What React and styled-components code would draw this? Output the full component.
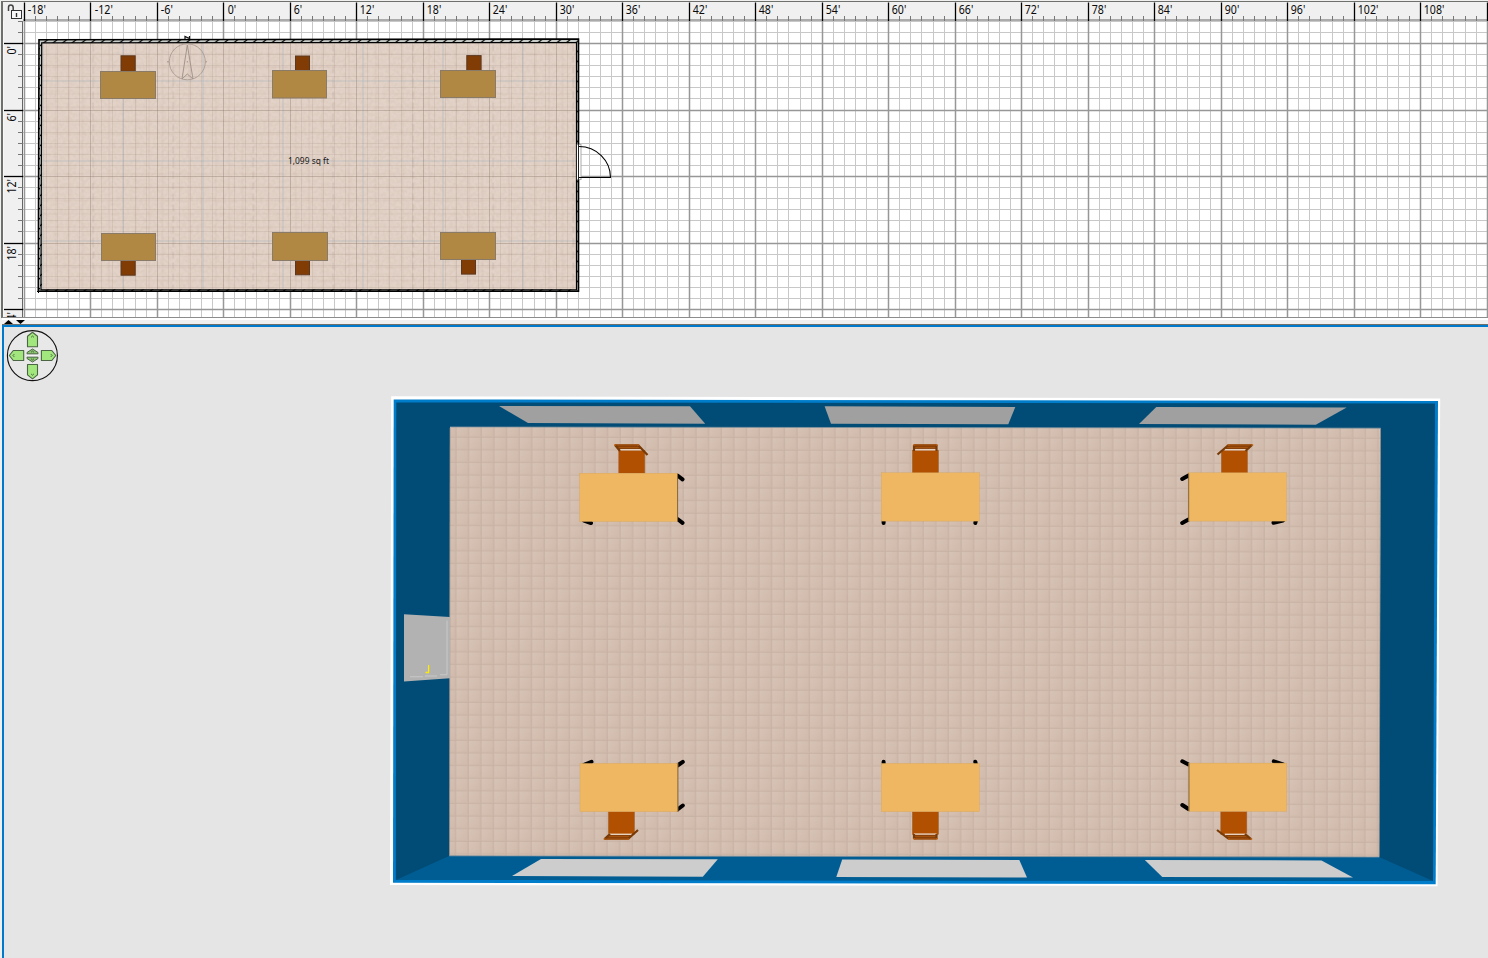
import React from "react";
import styled, { createGlobalStyle } from "styled-components";

const GlobalStyle = createGlobalStyle`
  * { box-sizing: border-box; }
  body { margin: 0; background: #f0f0f0; overflow: hidden; }
`;

const Window = styled.main`
  display: flex;
  flex-direction: column;
  width: 1488px;
  height: 958px;
  overflow: hidden;
  background: #f0f0f0;
  font-family: "Noto Sans", "Open Sans", sans-serif;
`;

const PlanPane = styled.section`
  display: grid;
  grid-template-columns: 20px 1fr;
  grid-template-rows: 19px 1fr;
  flex: none;
  height: 317px;
  margin: 1px 0 0 1px;
  border: solid #6e706c;
  border-width: 1px 0 0 2px;
  border-bottom: 1px solid #8c8c8c;
`;

const Drawing = styled.svg`
  display: block;
  width: 100%;
  height: 100%;
  min-width: 0;
  min-height: 0;
  overflow: hidden;
  background: ${(p) => p.$fill || "#f0f0f0"};
`;

const RulerLabel = styled.text`
  font: 12px "Noto Sans", "Open Sans", sans-serif;
  fill: #0a0a0a;
`;

const AreaLabel = styled.text`
  font: 8.8px "Noto Sans", "Open Sans", sans-serif;
  fill: #1a1a1a;
`;

const Divider = styled.div`
  display: flex;
  align-items: flex-end;
  gap: 3px;
  height: 7px;
  flex: none;
  padding-left: 2px;
  margin-left: 2px;
  background: linear-gradient(#fff 0 2px, #f0f0f0 2px);
  border-bottom: 1px solid #6e706c;
`;

const Collapse = styled.svg`
  display: block;
  width: 9px;
  height: 4px;
  transform: ${(p) => (p.$down ? "none" : "rotate(180deg)")};
`;

const ViewPane = styled.section`
  flex: 1;
  min-height: 0;
  margin-left: 2px;
  border: solid #007acc;
  border-width: 2px 0 0 2px;
  background: #e5e5e5;
`;

const STEP = 66.5;
const range = (n) => Array.from({ length: n }, (_, i) => i);
const gx = (i) => Math.floor(24.2 + (i * STEP) / 6) + 0.5;
const gy = (i) => Math.floor(21.4 + (i * STEP) / 6) + 0.5;

const labelWidth = (s) => {
  const digits = s.replace(/\D/g, "").length;
  return digits * 6.05 + 2.4 + (s[0] === "-" ? 3.6 : 0);
};

function TopRuler() {
  return (
    <Drawing viewBox="23 2 1465 19">
      <path d="M23 20H1488" stroke="#666" />
      {range(133).map((i) => (
        <path
          key={i}
          d={`M${gx(i)} ${i % 6 ? 16 : 2.5}V21`}
          stroke={i % 6 ? "#777" : "#000"}
          strokeWidth={i % 6 ? 1 : 1.3}
        />
      ))}
      {range(22).map((i) => {
        const s = `${i * 6 - 18}'`;
        const start = i === 1 || i === 3 ? 4.2 : 3.3;
        return (
          <RulerLabel key={i} x={gx(i * 6) + start} y="13.8" textLength={labelWidth(s)} lengthAdjust="spacingAndGlyphs">
            {s}
          </RulerLabel>
        );
      })}
    </Drawing>
  );
}

function SideRuler() {
  return (
    <Drawing viewBox="3 21 20 296">
      <path d="M3.5 21V317" stroke="#f8f8f8" />
      <path d="M22.5 21V317" stroke="#666" />
      {range(27).map((i) => {
        const major = i % 6 === 2;
        return (
          <path
            key={i}
            d={`M${major ? 4 : 18} ${gy(i)}H23`}
            stroke={major ? "#000" : "#777"}
            strokeWidth={major ? 1.3 : 1}
          />
        );
      })}
      {range(5).map((i) => {
        const s = `${i * 6}'`;
        const w = labelWidth(s);
        return (
          <RulerLabel
            key={i}
            transform={`translate(15.6 ${gy(i * 6 + 2) + 2.6 + w}) rotate(-90)`}
            textLength={w}
            lengthAdjust="spacingAndGlyphs"
          >
            {s}
          </RulerLabel>
        );
      })}
    </Drawing>
  );
}

function LockCorner() {
  return (
    <Drawing viewBox="3 2 20 19">
      <path d="M8.5 11V7.5Q8.5 5 10.8 5T13.2 7.5V10.5" fill="none" stroke="#444" strokeWidth="1.5" />
      <rect x="11.5" y="10.5" width="10" height="8" fill="#fafafa" stroke="#333" />
      <path d="M16.5 13V17" stroke="#333" strokeWidth="1.4" />
    </Drawing>
  );
}

const planDesks = [
  [100.5, 71.5, 55, 27],
  [272.5, 70.5, 54, 27.5],
  [440.5, 70.5, 55, 27],
  [101.5, 233.5, 54, 27],
  [272.5, 232.5, 55, 28],
  [440.5, 232.5, 55, 27],
];
const planChairs = [
  [121, 55.8, 14.2, 15.5],
  [295.5, 56, 14, 15],
  [466.8, 55.6, 14.3, 15],
  [121, 260.5, 14.2, 14.7],
  [295.5, 260.5, 14, 14.3],
  [461.5, 259.5, 14, 14.6],
];

function PlanCanvas() {
  return (
    <Drawing $fill="#fff" viewBox="23 21 1465 296">
      <defs>
        <pattern id="hatch" width="9.5" height="10" x="2" y="37" patternUnits="userSpaceOnUse">
          <path d="M-1 9.5L10.5 .5" stroke="#000" strokeWidth="1.1" />
        </pattern>
        <pattern id="planTile" x="42.5" y="80.5" width="80" height="80" patternUnits="userSpaceOnUse">
          <path d="M0 13.3H80M0 26.6H80M0 40H80M0 53.3H80M0 66.6H80M13.3 0V80M26.6 0V80M40 0V80M66.6 0V80" stroke="#b79d8f" strokeOpacity=".2" />
          <path d="M50.7 0V80" stroke="#7f685d" strokeOpacity=".2" strokeDasharray="7 4" />
          <path d="M0 .2H80M.2 0V80" stroke="#a9b4bc" strokeOpacity=".8" />
        </pattern>
        <filter id="grain" x="0" y="0" width="100%" height="100%">
          <feTurbulence type="fractalNoise" baseFrequency=".3" numOctaves="2" seed="5" />
          <feColorMatrix values="0 0 0 0 .55  0 0 0 0 .42  0 0 0 0 .33  .9 0 0 0 -.32" />
        </filter>
      </defs>
      {range(133).filter((i) => i % 6).map((i) => <path key={i} d={`M${gx(i)} 21V317`} stroke="#c8c8c8" />)}
      {range(27).filter((i) => i % 6 !== 2).map((i) => <path key={i} d={`M23 ${gy(i)}H1488`} stroke="#c8c8c8" />)}
      {range(23).map((i) => <path key={i} d={`M${gx(i * 6)} 21V317`} stroke="#979797" strokeWidth="1.5" />)}
      {range(5).map((i) => <path key={i} d={`M23 ${gy(i * 6 + 2)}H1488`} stroke="#979797" strokeWidth="1.5" />)}

      <path d="M42 43H577V290H41Z" fill="#e2d2c7" />
      <rect x="42" y="43" width="535" height="247" filter="url(#grain)" opacity=".42" />
      <rect x="42" y="43" width="535" height="247" fill="url(#planTile)" />
      {range(49).map((i) => <path key={i} d={`M${gx(i + 2)} 43V290`} stroke="#857366" strokeOpacity={(i + 2) % 6 ? 0.14 : 0.36} />)}
      {range(22).map((i) => <path key={i} d={`M42 ${gy(i + 3)}H577`} stroke="#857366" strokeOpacity={(i + 3) % 6 === 2 ? 0.36 : 0.14} />)}

      <path d="M38.8 39.8L578.5 39V291H38.2Z M42 43V289.5H576.5V42.7Z" fill="#c8ccc8" fillRule="evenodd" />
      <path d="M38.8 39.8L578.5 39V291H38.2Z M42 43V289.5H576.5V42.7Z" fill="url(#hatch)" fillRule="evenodd" />
      <path d="M39 39.8L578.5 39V291.2H38.3Z" fill="none" stroke="#000" strokeWidth="1.6" />
      <path d="M41.7 42.8L576.5 42.5V289.8H41Z" fill="none" stroke="#000" strokeWidth="1.2" />
      <path d="M37 291.5H40M38.5 289V293" stroke="#000" />
      <rect x="576.5" y="144.5" width="4.5" height="35" fill="#fff" stroke="#aaa" />
      <path d="M576.5 144V180M578.5 144V180" stroke="#222" />
      <path d="M579 146.5A31.5 31 0 0 1 610.5 177.5H579" fill="none" stroke="#000" strokeWidth="1.1" />

      {planChairs.map(([x, y, width, height], i) => (
        <rect key={i} {...{ x, y, width, height }} fill="#803c04" stroke="#5d3820" />
      ))}
      {planDesks.map(([x, y, width, height], i) => (
        <rect key={i} {...{ x, y, width, height }} fill="#b08844" stroke="#8a7a68" />
      ))}
      <AreaLabel x="288" y="163.8" textLength="41" lengthAdjust="spacingAndGlyphs">1,099 sq ft</AreaLabel>

      <g fill="none" stroke="#a3968d">
        <circle cx="187.3" cy="61.8" r="18" strokeOpacity=".8" />
        <path d="M187.3 45L182 79L187.3 74L193 79ZM187.3 61V62.5M167 61.8H169M205.5 61.8H207" />
      </g>
      <path d="M185 39V36.5L189.5 38.5V36" fill="none" stroke="#111" strokeWidth="1.2" />
    </Drawing>
  );
}

const navArrow = "M-5 7.2V-3.2L0 -7.2L5 -3.2V7.2Z";
const navPlacements = [
  [32.5, 339.5, 0],
  [48.6, 355.5, 90],
  [32.5, 371.7, 180],
  [16.5, 355.5, 270],
];

function Navigator() {
  return (
    <g>
      <circle cx="32.4" cy="355.6" r="25" fill="#e8e8e8" stroke="#111" strokeWidth="1.1" />
      {navPlacements.map(([x, y, a]) => (
        <g key={a} transform={`translate(${x} ${y}) rotate(${a})`}>
          <path d={navArrow} fill="#a1e77e" stroke="#4c6544" strokeWidth="1.1" strokeLinejoin="round" />
          <path d="M-1.4 -2.2L0 -3.5L1.4 -2.2" fill="none" stroke="#4c6544" />
        </g>
      ))}
      <path d="M27 353.8V352.5L32.5 349L38 352.5V353.8ZM27 357.2V358.5L32.5 362L38 358.5V357.2Z" fill="#8cc770" stroke="#4c6544" />
      <path d="M27 355.5H38" stroke="#f4f4f4" />
      <path d="M31 352.3L32.5 351L34 352.3M31 358.7L32.5 360L34 358.7" fill="none" stroke="#4c6544" />
    </g>
  );
}

const viewDesks = [
  { x: 579.7, y: 473.2, legs: "M677.5 475.5L682.5 479.3M677.5 519L682.5 522.8M584 520.5L591 523", edge: 677.6 },
  { x: 881.3, y: 472.8, legs: "M883.6 521V523M976 520L975.3 523" },
  { x: 1188.5, y: 472.8, legs: "M1188.5 475.5L1182.2 479M1188.5 519.5L1182.2 523M1283 520.5L1273.5 522.8", edge: 1188.7 },
  { x: 580, y: 763.4, legs: "M677.5 765.5L682.8 761.8M677.5 809.5L682.8 805.5M584 764.8L591.5 761.8", edge: 677.9 },
  { x: 881.3, y: 763.4, legs: "M883.6 764V761.8M976 765L975.3 761.8" },
  { x: 1188.8, y: 763.1, legs: "M1188.5 764.5L1182.3 761.3M1188.5 809L1182.3 805M1283 764.5L1273.8 761.3", edge: 1189 },
];

const viewChairs = [
  { x: 618.8, y: 449.8, back: [615, 445, 638, 620, 451, 647.5, 455], shift: 4 },
  { x: 912.4, y: 449.8, back: [914, 445, 936.5, 914, 451, 936.5, 451], shift: 0 },
  { x: 1221.4, y: 449.8, back: [1228.5, 445, 1252, 1217.5, 454.5, 1245.5, 451], shift: -4 },
  { x: 608.4, y: 811.5, back: [604.5, 839, 628, 610, 834, 638, 830], shift: 4 },
  { x: 912.4, y: 811.5, back: [914, 838.8, 936.5, 914, 834, 936.5, 834], shift: 0 },
  { x: 1220.8, y: 811.5, back: [1228.8, 839, 1251, 1217, 830, 1245, 834], shift: -4 },
];

function Chair({ x, y, back, shift }) {
  const [lx, by, rx, lx2, ly2, rx2, ry2] = back;
  const upper = by < y;
  const dir = upper ? 1 : -1;
  const gap = by + dir * 4.7;
  return (
    <g>
      <rect x={x} y={y + (upper ? 0.6 : 0)} width="26" height="22.8" fill="#b05000" stroke="#a5622c" strokeWidth=".6" />
      <path d={`M${lx + shift} ${gap}H${rx + shift}`} stroke="#ead2c0" strokeWidth="1.4" />
      <path
        d={`M${lx} ${by - dir * 0.8}H${rx}L${rx + shift * 0.8} ${by + dir * 3.9}H${lx + shift * 0.8}Z`}
        fill="#853f08"
      />
      <path d={`M${lx} ${by}H${rx}M${lx + shift / 2} ${by + dir * 2.4}H${rx + shift / 2}`} stroke="#ac570f" strokeWidth=".9" />
      <path d={`M${lx} ${by}L${lx2} ${ly2}M${rx} ${by}L${rx2} ${ry2}`} stroke="#783a06" strokeWidth="2.2" />
      <path d={`M${lx - 0.8} ${by}h2M${rx - 0.8} ${by}h2`} stroke="#b85a0c" strokeWidth="1.6" />
    </g>
  );
}

function RoomView() {
  return (
    <Drawing $fill="#e5e5e5" viewBox="4 327 1484 631">
      <defs>
        <linearGradient id="tileShade" x2="1" y2=".6">
          <stop offset="0" stopColor="#fff" stopOpacity=".07" />
          <stop offset="1" stopColor="#8e6c58" stopOpacity=".06" />
        </linearGradient>
        <pattern
          id="floorTile"
          width="12.63"
          height="12.63"
          patternUnits="userSpaceOnUse"
          patternTransform="translate(455.8 436.8) rotate(.07)"
        >
          <rect width="12.63" height="12.63" fill="#d5c0b2" />
          <rect width="12.63" height="12.63" fill="url(#tileShade)" />
          <path d="M0 .3H12.63M.3 0V12.63" stroke="#c0ab9b" strokeOpacity=".75" />
          <path d="M0 12.3H12.63M12.3 0V12.63" stroke="#c9b4a5" strokeOpacity=".5" />
        </pattern>
        <filter id="mottle" x="0" y="0" width="100%" height="100%">
          <feTurbulence type="fractalNoise" baseFrequency=".04 .1" numOctaves="2" seed="8" />
          <feColorMatrix values="0 0 0 0 .65  0 0 0 0 .53  0 0 0 0 .45  .8 0 0 0 -.3" />
        </filter>
      </defs>
      <Navigator />
      <path d="M391.2 396.3L1440.2 398.6L1437.5 886.3L390 885Z" fill="#fff" />
      <path d="M393.7 399.4L1438 401L1435.7 884.3L393 882.8Z" fill="#007dca" />
      <path d="M396.3 402.4L1435 403.5L1433 881L395.8 880Z" fill="#004c76" />
      <path d="M396 880L449 856L1379 857L1433 881Z" fill="#005d94" />
      <path d="M450 427L1380.7 428.2L1379.3 857L449.3 855.8Z" fill="url(#floorTile)" />
      <path d="M450 427L1380.7 428.2M449.3 855.8L1379.3 857" stroke="#8a97a0" strokeWidth=".8" />
      <path d="M450 428L449.5 855M1380.5 429L1379.2 856" stroke="#8f8781" strokeWidth=".7" />
      <rect x="451" y="429" width="928" height="426" filter="url(#mottle)" opacity=".35" />
      <g fill="#a0a0a0">
        <path d="M499 406L690 406.3L705.2 423.8L528 423Z" />
        <path d="M824.6 406.2L1015.3 406.9L1008.3 424.2L831 423.7Z" />
        <path d="M1156.3 407L1346.7 407.4L1315.8 424.7L1139 424Z" />
      </g>
      <g fill="#cdcdcd">
        <path d="M541 859L717.8 859.3L702.8 876.7L512 876Z" />
        <path d="M842.2 859.5L1019.3 860L1027 877.5L836.3 876.9Z" />
        <path d="M1144.8 860L1321.5 860.4L1353 877.6L1162.3 877Z" />
      </g>
      <path d="M404 614.3L450 616.9V678.3L404 681.4Z" fill="#b2b2b2" />
      <path d="M447 620.5V674.5M410 676.8H423M425 676H437M440 674.7H447" fill="none" stroke="#c8c8c8" strokeWidth="1.1" />
      <path d="M428.6 665V672.7M425.5 672.5H429" fill="none" stroke="#ffeb00" strokeWidth="1.3" />
      {viewDesks.map((d) => (
        <path key={`${d.x}-${d.y}`} d={d.legs} stroke="#000" strokeWidth="4" strokeLinecap="round" />
      ))}
      {viewChairs.map((c) => <Chair key={`${c.x}-${c.y}`} {...c} />)}
      {viewDesks.map((d) => (
        <g key={`${d.x}-${d.y}`}>
          <rect x={d.x} y={d.y} width="98" height="48.3" fill="#efb761" stroke="#d8a65d" strokeWidth=".4" />
          {d.edge && <path d={`M${d.edge} ${d.y + 0.5}v47.8`} stroke="#6b532f" strokeWidth=".8" />}
        </g>
      ))}
    </Drawing>
  );
}

export default function App() {
  return (
    <Window>
      <GlobalStyle />
      <PlanPane>
        <LockCorner />
        <TopRuler />
        <SideRuler />
        <PlanCanvas />
      </PlanPane>
      <Divider>
        <Collapse viewBox="0 0 9 4"><path d="M0 0H9L4.5 4Z" /></Collapse>
        <Collapse $down viewBox="0 0 9 4"><path d="M0 0H9L4.5 4Z" /></Collapse>
      </Divider>
      <ViewPane>
        <RoomView />
      </ViewPane>
    </Window>
  );
}
